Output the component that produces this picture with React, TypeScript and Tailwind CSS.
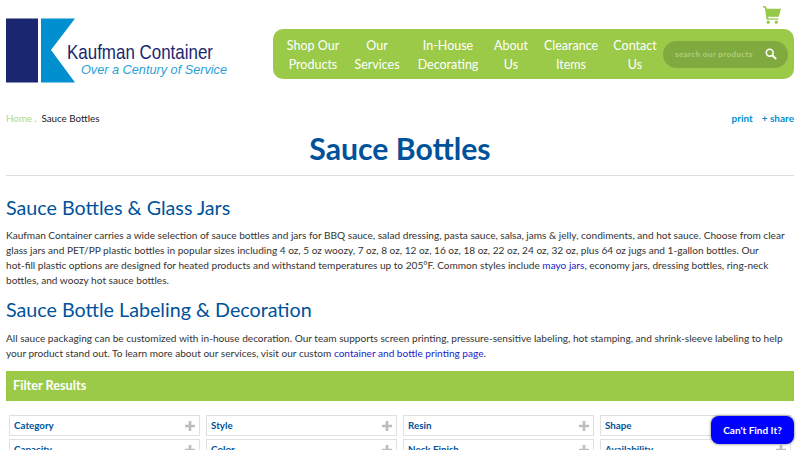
import React from 'react';

const navItems = [
    { lines: ['Shop Our', 'Products'], w: 'w-[64px]' },
    { lines: ['Our', 'Services'], w: 'w-[64px]' },
    { lines: ['In-House', 'Decorating'], w: 'w-[78px]' },
    { lines: ['About', 'Us'], w: 'w-[48px]' },
    { lines: ['Clearance', 'Items'], w: 'w-[72px]' },
    { lines: ['Contact', 'Us'], w: 'w-[56px]' },
];

const filters = ['Category', 'Style', 'Resin', 'Shape', 'Capacity', 'Color', 'Neck Finish', 'Availability'];

const Logo = () => (
    <svg width="228" height="66" viewBox="0 0 228 66" className="block">
        <rect x="0" y="0.5" width="32" height="64" fill="#1b2670" />
        <path d="M35 0.5 H69 L45 32 L69 64.5 H35 Z" fill="#0090cf" />
        <text x="61" y="41" fontFamily="'Liberation Sans', sans-serif" fontSize="21" fill="#1b2670" textLength="146" lengthAdjust="spacingAndGlyphs">Kaufman Container</text>
        <text x="75" y="56" fontFamily="'Liberation Sans', sans-serif" fontSize="13.5" fontStyle="italic" fill="#2a9fd8" textLength="146" lengthAdjust="spacingAndGlyphs">Over a Century of Service</text>
    </svg>
);

const Cart = () => (
    <svg width="18" height="18" viewBox="0 0 20 20" fill="#96c947" className="block">
        <path d="M0 0 L3.4 0.6 L4.2 3 H20 L17.5 12 H5.7 L6 14 H17 V15.4 H4 L2 2 L0 1.6 Z" />
        <circle cx="5.8" cy="18" r="1.8" />
        <circle cx="14.8" cy="18" r="1.8" />
    </svg>
);

const Search = () => (
    <svg width="12" height="12" viewBox="0 0 14 14" fill="none" stroke="white" className="block">
        <circle cx="5.5" cy="5.5" r="4" strokeWidth="1.8" />
        <path d="M8.5 8.5 L13 13" strokeWidth="2.4" />
    </svg>
);

const Plus = () => (
    <svg width="10" height="10" viewBox="0 0 10 10" fill="#bdbdbd" className="block">
        <path d="M3.7 0 H6.3 V3.7 H10 V6.3 H6.3 V10 H3.7 V6.3 H0 V3.7 H3.7 Z" />
    </svg>
);

export default function App() {
    return (
        <div className="relative h-[450px] w-[800px] overflow-hidden bg-white px-[6px] font-['Lato',sans-serif] text-[#333]">
            <header className="flex h-[100px] justify-between">
                <div className="pt-[18px]">
                    <Logo />
                </div>
                <div className="flex w-[521px] flex-col items-end">
                    <div className="flex h-[29px] items-start pr-[13px] pt-[6px]">
                        <Cart />
                    </div>
                    <nav className="flex h-[50px] w-full items-center rounded-[10px] bg-[#9bca48] pl-[8px] pr-[6px]">
                        <div className="flex flex-none items-center pt-[2px] text-[12.5px] leading-[19px] text-white">
                            {navItems.map((item) => (
                                <a key={item.lines[0]} className={`${item.w} text-center`}>
                                    {item.lines[0]}
                                    <br />
                                    {item.lines[1]}
                                </a>
                            ))}
                        </div>
                        <div className="flex h-[27px] w-[125px] flex-none items-center justify-between rounded-full bg-[#80aa40] pl-[12px] pr-[11px]">
                            <span className="whitespace-nowrap text-[8px] font-bold tracking-[0.4px] text-[#b0cf7c]">search our products</span>
                            <Search />
                        </div>
                    </nav>
                </div>
            </header>

            <div className="flex h-[36px] items-center justify-between">
                <div className="text-[9.8px]">
                    <a className="text-[#b3d67a]">Home</a>
                    <span className="ml-[2px] mr-[5px] text-[#9bca48]">.</span>
                    <span className="text-[#222]">Sauce Bottles</span>
                </div>
                <div className="flex gap-[9px] text-[10px] font-bold text-[#0090cf]">
                    <a>print</a>
                    <a>+ share</a>
                </div>
            </div>

            <h1 className="h-[39px] text-center text-[30.2px] font-bold leading-[24px] text-[#00529b]">Sauce Bottles</h1>
            <div className="border-b border-[#ddd]" />

            <h2 className="mt-[19px] text-[19.7px] leading-[26px] text-[#00529b]">Sauce Bottles &amp; Glass Jars</h2>
            <p className="mt-[7px] text-[10.1px] leading-[15px]">
                Kaufman Container carries a wide selection of sauce bottles and jars for BBQ sauce, salad dressing, pasta sauce, salsa, jams &amp; jelly, condiments, and hot sauce. Choose from clear glass jars and PET/PP plastic bottles in popular sizes including 4 oz, 5 oz woozy, 7 oz, 8 oz, 12 oz, 16 oz, 18 oz, 22 oz, 24 oz, 32 oz, plus 64 oz jugs and 1-gallon bottles. Our<br />hot-fill plastic options are designed for heated products and withstand temperatures up to 205°F. Common styles include <a className="text-[#2222cc]">mayo jars</a>, economy jars, dressing bottles, ring-neck<br />bottles, and woozy hot sauce bottles.
            </p>
            <h2 className="mt-[9px] text-[19.7px] leading-[26px] text-[#00529b]">Sauce Bottle Labeling &amp; Decoration</h2>
            <p className="mt-[8px] text-[10.1px] leading-[15px]">
                All sauce packaging can be customized with in-house decoration. Our team supports screen printing, pressure-sensitive labeling, hot stamping, and shrink-sleeve labeling to help your product stand out. To learn more about our services, visit our custom <a className="text-[#2222cc]">container and bottle printing page</a>.
            </p>

            <div className="mt-[10px] flex h-[30px] items-center bg-[#9bca48] px-[7px] text-[12.7px] font-bold text-white">Filter Results</div>

            <div className="mt-[14px] grid grid-cols-4 gap-x-[6px] gap-y-[3px] px-[3px]">
                {filters.map((name) => (
                    <div key={name} className="flex h-[21px] items-center justify-between border-[1.5px] border-[#e0e0e0] pl-[4px] pr-[4px] text-[9.8px] font-bold text-[#00529b]">
                        {name}
                        <Plus />
                    </div>
                ))}
            </div>

            <button className="absolute left-[711px] top-[416px] flex h-[28px] w-[83px] items-center justify-center rounded-[8px] bg-[#0000ff] text-[10px] font-bold text-white shadow-[0_0_3px_rgba(0,0,0,0.6)]">Can't Find It?</button>
        </div>
    );
}
